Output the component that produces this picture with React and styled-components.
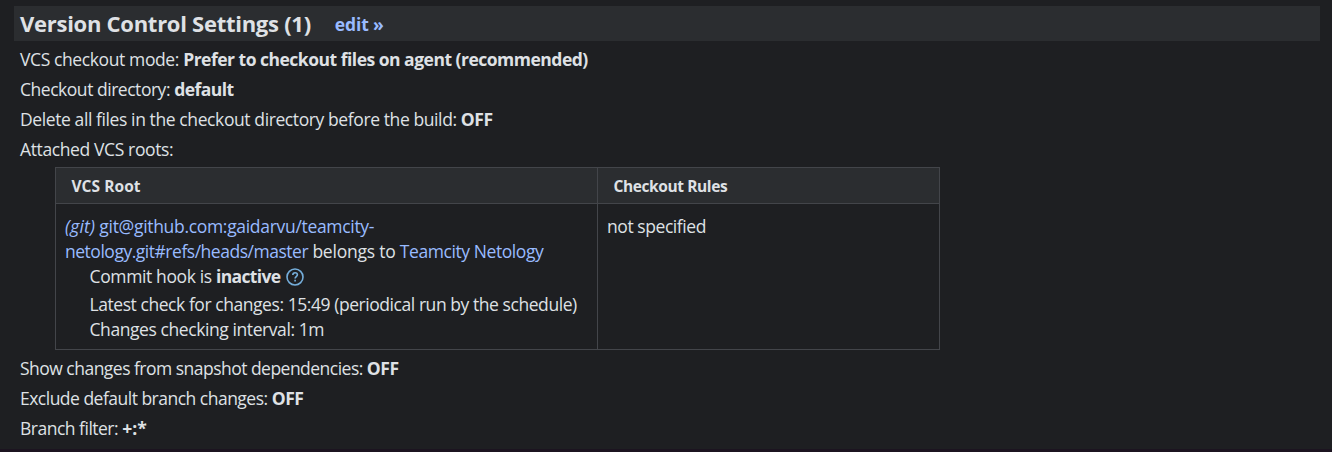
import React from "react";
import styled, { createGlobalStyle } from "styled-components";

const GlobalStyle = createGlobalStyle`
  * { box-sizing: border-box; }
  html, body { margin: 0; background: #1e1f22; }
  body {
    font-family: "Open Sans", "Noto Sans", sans-serif;
    font-size: 17.5px;
    line-height: 25px;
    color: #dfe1e5;
  }
`;

const Page = styled.main`
  height: 452px;
  padding: 6px 12px 0 14px;
  overflow: hidden;
  border-bottom: 3px solid #1c1420;
`;

const SectionHeader = styled.header`
  display: flex;
  align-items: center;
  height: 35px;
  padding-left: 6px;
  background: #2b2d30;
`;

const Title = styled.h2`
  margin: 0 24px 0 0;
  font-size: 22px;
  font-weight: 700;
  line-height: 33px;
`;

const Text = styled.span`
  letter-spacing: ${({ $track = 0 }) => $track}px;
  white-space: pre;
`;

const Strong = styled(Text)`
  font-weight: 700;
`;

const Link = styled(Text).attrs({ as: "a" })`
  color: #99bbff;
`;

const EditLink = styled(Link)`
  padding-top: 2px;
  font-weight: 700;
`;

const Settings = styled.div`
  display: flex;
  flex-direction: column;
  padding: 3px 0 0 6px;
`;

const Setting = styled.div`
  height: 30px;
  line-height: 30px;
  white-space: nowrap;
`;

const RootsTable = styled.table`
  width: 885px;
  height: 183px;
  margin: 3px 0 0 41px;
  border-collapse: collapse;
  table-layout: fixed;
`;

const HeadCell = styled.th`
  width: ${({ $width }) => $width}px;
  height: 36px;
  padding: 2px 0 0 15.5px;
  border: 1px solid #43454a;
  background: #2b2d30;
  font-size: 15.5px;
  text-align: left;
`;

const Cell = styled.td`
  padding: 10px 9px 0;
  border: 1px solid #43454a;
  vertical-align: top;
`;

const Line = styled.div`
  display: flex;
  align-items: center;
  height: 25px;
`;

const Details = styled.div`
  padding-left: 24.5px;
`;

const HookLine = styled(Line)`
  margin-bottom: 3px;
`;

const HelpIcon = styled.svg`
  width: 18px;
  height: 18px;
  margin-left: 6px;
`;

function Help() {
  return (
    <HelpIcon viewBox="0 0 18 18" fill="none" stroke="#75aedb" strokeWidth="1.6">
      <circle cx="9" cy="9" r="8" />
      <path d="M6.8 7.1c0-1.5 1-2.4 2.3-2.4s2.3.8 2.3 2.1c0 1.7-2.3 1.8-2.3 3.6" />
      <path d="M9.1 11.7v1.7" />
    </HelpIcon>
  );
}

function Row({ label, value, track, valueTrack }) {
  return (
    <Setting>
      <Text $track={track}>{`${label}: `}</Text>
      {value && <Strong $track={valueTrack}>{value}</Strong>}
    </Setting>
  );
}

export default function App() {
  return (
    <>
      <GlobalStyle />
      <Page>
        <SectionHeader>
          <Title><Text $track={-0.27}>Version Control Settings (1)</Text></Title>
          <EditLink $track={-0.15}>edit »</EditLink>
        </SectionHeader>
        <Settings>
          <Row
            label="VCS checkout mode"
            value="Prefer to checkout files on agent (recommended)"
            track={-0.39}
            valueTrack={-0.5}
          />
          <Row label="Checkout directory" value="default" track={-0.47} valueTrack={-0.55} />
          <Row
            label="Delete all files in the checkout directory before the build"
            value="OFF"
            track={-0.4}
            valueTrack={-0.4}
          />
          <Row label="Attached VCS roots" track={-0.38} />
        </Settings>
        <RootsTable>
          <thead>
            <tr>
              <HeadCell $width={542}><Text $track={0.05}>VCS Root</Text></HeadCell>
              <HeadCell $width={342}><Text $track={-0.4}>Checkout Rules</Text></HeadCell>
            </tr>
          </thead>
          <tbody>
            <tr>
              <Cell>
                <Line>
                  <Link $track={0.17}><em>(git)</em></Link>
                  <Link $track={-0.31}> git@github.com:gaidarvu/teamcity-</Link>
                </Line>
                <Line>
                  <Link $track={-0.48}>netology.git#refs/heads/master</Link>
                  <Text $track={-0.23}> belongs to </Text>
                  <Link $track={-0.42}>Teamcity Netology</Link>
                </Line>
                <Details>
                  <HookLine>
                    <Text $track={-0.37}>Commit hook is </Text>
                    <Strong $track={-0.65}>inactive</Strong>
                    <Help />
                  </HookLine>
                  <Line>
                    <Text $track={-0.44}>
                      Latest check for changes: 15:49 (periodical run by the schedule)
                    </Text>
                  </Line>
                  <Line><Text $track={-0.42}>Changes checking interval: 1m</Text></Line>
                </Details>
              </Cell>
              <Cell>
                <Line><Text $track={-0.43}>not specified</Text></Line>
              </Cell>
            </tr>
          </tbody>
        </RootsTable>
        <Settings>
          <Row
            label="Show changes from snapshot dependencies"
            value="OFF"
            track={-0.52}
            valueTrack={-0.4}
          />
          <Row label="Exclude default branch changes" value="OFF" track={-0.51} valueTrack={-0.4} />
          <Row label="Branch filter" value="+:*" track={-0.5} />
        </Settings>
      </Page>
    </>
  );
}
